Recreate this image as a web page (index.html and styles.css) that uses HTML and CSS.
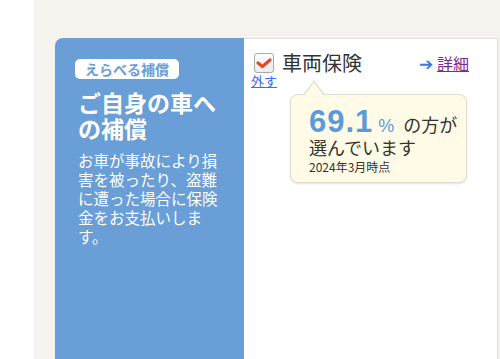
FILE: index.html
```html
<!DOCTYPE html>
<html lang="ja">
<head>
  <meta charset="UTF-8">
  <title>えらべる補償</title>
  <link rel="stylesheet" href="styles.css">
</head>
<body>

<div class="page">
  <div class="card">

    <!-- 左：説明 -->
    <div class="side">
      <span class="badge">えらべる補償</span>
      <h2 class="side-title">ご自身の車への補償</h2>
      <p class="side-text">お車が事故により損害を被ったり、盗難に遭った場合に保険金をお支払いします。</p>
    </div>

    <!-- 右：選択 -->
    <div class="main">
      <div class="head">
        <div class="check">
          <span class="checkbox">
            <svg width="16" height="12" viewBox="0 0 16 12"><polyline points="2,6 6.5,9.5 14,3" fill="none" stroke="#e8472b" stroke-width="3.2" stroke-linecap="round" stroke-linejoin="round"/></svg>
          </span>
          <a href="#" class="remove">外す</a>
        </div>
        <div class="title">車両保険</div>
        <div class="detail"><span class="arrow">➔</span> <a href="#">詳細</a></div>
      </div>

      <div class="tip">
        <div class="tip-line"><span class="rate">69.1</span><span class="pct">%</span><span class="tip-text">の方が</span></div>
        <div class="tip-text">選んでいます</div>
        <div class="tip-date">2024年3月時点</div>
      </div>
    </div>

  </div>
</div>

</body>
</html>
```

FILE: styles.css
```css
* { margin: 0; padding: 0; box-sizing: border-box; }

body {
  font-family: "Noto Sans CJK JP", "Noto Sans", sans-serif;
  background: #fff;
  height: 359px;
  overflow: hidden;
}

.page {
  margin-left: 34px;
  background: #f6f3ee;
  height: 359px;
  padding: 38px 2px 0 21px;
}

.card {
  display: flex;
  height: 100%;
}

.side {
  width: 189px;
  flex-shrink: 0;
  display: flex;
  flex-direction: column;
  align-items: flex-start;
  background: #699ed6;
  border-top-left-radius: 8px;
  padding: 21px 23px 0 23px;
  color: #fff;
}

.badge {
  display: block;
  margin-left: -3px;
  height: 20px;
  padding: 0 10px;
  background: #fff;
  border-radius: 5px;
  color: #6a9ed6;
  font-size: 14px;
  font-weight: bold;
  line-height: 20px;
}

.side-title {
  margin-top: 10px;
  font-size: 23px;
  font-weight: bold;
  line-height: 26px;
}

.side-text {
  margin-top: 10px;
  font-size: 15.5px;
  line-height: 19px;
}

.main {
  flex: 1;
  background: #fff;
  border-top: 1px solid #e2e0dc;
  border-right: 1px solid #e2e0dc;
  padding: 14px 28px 0 7px;
}

.head {
  display: flex;
  align-items: flex-start;
}

.check {
  width: 26px;
  display: flex;
  flex-direction: column;
  align-items: center;
}

.checkbox {
  width: 20px;
  height: 20px;
  border: 1px solid #a9a9a9;
  border-radius: 3px;
  background: linear-gradient(#fdfdfd, #ececec);
  display: flex;
  align-items: center;
  justify-content: center;
}

.remove {
  font-size: 13px;
  line-height: 15px;
  color: #3b6cf2;
}

.title {
  margin-left: 5px;
  font-size: 20px;
  line-height: 20px;
  color: #333;
}

.detail {
  margin-left: auto;
  font-size: 16px;
  line-height: 20px;
  white-space: nowrap;
}

.detail a { color: #7d2a8e; }
.arrow { color: #3d78e3; font-size: 17px; }

.tip {
  position: relative;
  width: 177px;
  margin: 6px 0 0 39px;
  padding: 13px 6px 8px 18px;
  background: #fffbe7;
  border: 1px solid #e0ddd2;
  border-radius: 8px;
  box-shadow: 0 1px 2px rgba(0, 0, 0, 0.12);
  color: #333;
}

.tip::before,
.tip::after {
  content: "";
  position: absolute;
  left: 12px;
  width: 0;
  height: 0;
  border-left: 11px solid transparent;
  border-right: 11px solid transparent;
}

.tip::before { top: -15px; border-bottom: 15px solid #e0ddd2; }
.tip::after { top: -13px; left: 13px; border-left-width: 10px; border-right-width: 10px; border-bottom: 14px solid #fffbe7; }

.tip-line {
  display: flex;
  align-items: baseline;
  white-space: nowrap;
  height: 28px;
}

.rate {
  font-family: "Liberation Sans", Arial, sans-serif;
  font-size: 31px;
  font-weight: bold;
  letter-spacing: 1px;
  line-height: 28px;
  color: #5c9bd9;
}

.pct {
  margin-left: 5px;
  font-family: "Liberation Sans", Arial, sans-serif;
  font-size: 18px;
  color: #5c9bd9;
}

.tip-text {
  font-size: 18px;
  line-height: 23px;
}

.tip-line .tip-text { margin-left: 9px; }

.tip-date {
  font-size: 12px;
  line-height: 15px;
}
```
